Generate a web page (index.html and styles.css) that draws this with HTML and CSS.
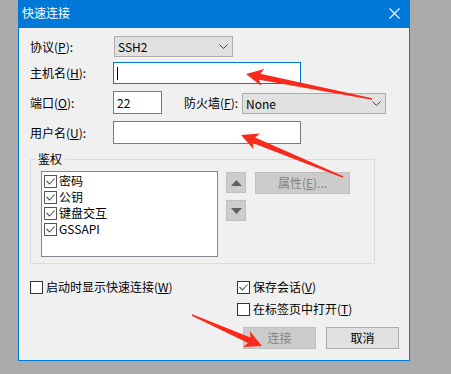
FILE: index.html
```html
<!DOCTYPE html>
<html>
 <head>
  <meta charset="UTF-8">
  <title>快速连接</title>
  <link rel="stylesheet" href="styles.css">
 </head>
 <body>
  <div class="dialog">
   <div class="titlebar">
    <span class="title">快速连接</span>
    <svg class="close" width="11" height="11" viewBox="0 0 11 11"><path d="M0.5 0.5 L10.5 10.5 M10.5 0.5 L0.5 10.5" stroke="#fff" stroke-width="1.1"/></svg>
   </div>

   <div class="content">
    <div class="row row1">
     <span class="lbl">协议(<u>P</u>):</span>
     <div class="combo proto">SSH2<svg class="chev" width="9" height="5" viewBox="0 0 9 5"><polyline points="0.5,0.5 4.5,4.5 8.5,0.5" fill="none" stroke="#444"/></svg></div>
    </div>
    <div class="row row2">
     <span class="lbl">主机名(<u>H</u>):</span>
     <div class="edit wide focus"><span class="caret"></span></div>
    </div>
    <div class="row row3">
     <span class="lbl">端口(<u>O</u>):</span>
     <div class="edit port">22</div>
     <span class="lbl2">防火墙(<u>F</u>):</span>
     <div class="combo fw">None<svg class="chev" width="9" height="5" viewBox="0 0 9 5"><polyline points="0.5,0.5 4.5,4.5 8.5,0.5" fill="none" stroke="#444"/></svg></div>
    </div>
    <div class="row row4">
     <span class="lbl">用户名(<u>U</u>):</span>
     <div class="edit wide user"></div>
    </div>

    <fieldset class="group">
     <legend>鉴权</legend>
     <div class="auth">
      <div class="list">
       <div class="item"><span class="cb"><svg width="11" height="11" viewBox="0 0 11 11"><polyline points="1.5,5 4.5,8 9.5,2.5" fill="none" stroke="#555" stroke-width="1.1"/></svg></span>密码</div>
       <div class="item"><span class="cb"><svg width="11" height="11" viewBox="0 0 11 11"><polyline points="1.5,5 4.5,8 9.5,2.5" fill="none" stroke="#555" stroke-width="1.1"/></svg></span>公钥</div>
       <div class="item"><span class="cb"><svg width="11" height="11" viewBox="0 0 11 11"><polyline points="1.5,5 4.5,8 9.5,2.5" fill="none" stroke="#555" stroke-width="1.1"/></svg></span>键盘交互</div>
       <div class="item"><span class="cb"><svg width="11" height="11" viewBox="0 0 11 11"><polyline points="1.5,5 4.5,8 9.5,2.5" fill="none" stroke="#555" stroke-width="1.1"/></svg></span>GSSAPI</div>
      </div>
      <div class="movers">
       <div class="mover"><svg width="11" height="6" viewBox="0 0 11 6"><polygon points="5.5,0 11,6 0,6" fill="#606060"/></svg></div>
       <div class="mover"><svg width="11" height="6" viewBox="0 0 11 6"><polygon points="0,0 11,0 5.5,6" fill="#606060"/></svg></div>
      </div>
      <div class="btn off prop">属性(<u>E</u>)...</div>
     </div>
    </fieldset>

    <div class="opts">
     <div class="opts-left">
      <div class="check"><span class="cb dark"></span>启动时显示快速连接(<u>W</u>)</div>
     </div>
     <div class="opts-right">
      <div class="check"><span class="cb dark"><svg width="11" height="11" viewBox="0 0 11 11"><polyline points="1.5,5 4.5,8 9.5,2.5" fill="none" stroke="#555" stroke-width="1.1"/></svg></span>保存会话(<u>V</u>)</div>
      <div class="check"><span class="cb dark"></span>在标签页中打开(<u>T</u>)</div>
     </div>
    </div>

    <div class="buttons">
     <div class="btn off">连接</div>
     <div class="btn">取消</div>
    </div>
   </div>
  </div>

  <!-- red annotation arrows drawn over the dialog -->
  <svg class="marks" width="451" height="374" viewBox="0 0 451 374">
   <polygon fill="#f92a1c" points="246,74 264.3,69 260.3,73.8 372.2,98.2 371.8,99.8 259.1,79.7 261,85.7"/>
   <polygon fill="#f92a1c" points="241,135 260,133.6 255.1,137.6 343.3,176.3 342.7,177.7 252.8,143.1 253.5,149.3"/>
   <polygon fill="#f92a1c" points="262,346 249.9,331.3 250.4,337.6 192.3,314.3 191.7,315.7 248,343.1 243,346.9"/>
  </svg>
 </body>
</html>
```

FILE: styles.css
```css
BODY    { margin: 0; background-color: #ABABAB; position: relative;
          font: 12px/16px "Noto Sans CJK SC", sans-serif; color: #000; }
U       { text-underline-offset: 1px; }

.dialog   { margin-left: 18px; width: 392px; box-sizing: border-box;
            border: 1px solid #0078D7; border-top: 0; background-color: #F0F0F0; }
.titlebar { height: 28px; background-color: #0078D7; color: #FFF;
            display: flex; align-items: center; padding: 0 9px 2px 3px; box-sizing: border-box; }
.close    { margin-left: auto; }

.content  { padding: 8px 0 11px 11px; }

.row      { display: flex; align-items: center; }
.row1     { margin-bottom: 5px; }
.row2     { margin-bottom: 7px; }
.row3     { margin-bottom: 7px; }
.row4     { margin-bottom: 7px; }
.lbl      { width: 83px; }
.lbl2     { width: 58px; margin-left: 22px; }

/* combo boxes and edit fields */
.combo    { height: 21px; box-sizing: border-box; border: 1px solid #ADADAD; background-color: #E1E1E1;
            display: flex; align-items: center; padding: 0 4px 0 3px; }
.chev     { margin-left: auto; }
.proto    { width: 119px; margin-left: 1px; }
.fw       { width: 144px; align-self: flex-end; }

.edit     { height: 22px; box-sizing: border-box; border: 1px solid #7A7A7A; background-color: #FFF;
            display: flex; align-items: center; padding-left: 3px; }
.wide     { width: 188px; }
.focus    { border-color: #0078D7; }
.port     { width: 49px; height: 23px; }
.user     { height: 23px; }
.caret    { width: 1px; height: 13px; background-color: #000; }

/* authentication group */
.group    { margin: 0; width: 345px; box-sizing: border-box; border: 1px solid #DCDCDC;
            padding: 4px 0 6px 4px; }
.group LEGEND { padding: 0 3px; }
.auth     { display: flex; align-items: flex-start; margin-left: 6px; }
.list     { width: 177px; height: 86px; box-sizing: border-box; border: 1px solid #828790;
            background-color: #FFF; padding-top: 1px; }
.item     { height: 16px; display: flex; align-items: center; }
.item .cb { margin: 0 2px 0 2px; }

.cb       { width: 13px; height: 13px; box-sizing: border-box; border: 1px solid #555;
            background-color: #FFF; display: inline-flex; align-items: center; justify-content: center; }
.cb.dark  { border-color: #333; margin-right: 3px; }

.movers   { display: flex; flex-direction: column; gap: 7px; margin: 1px 0 0 8px; }
.mover    { width: 20px; height: 21px; box-sizing: border-box; border: 1px solid #BFBFBF;
            background-color: #CCC; display: flex; align-items: center; justify-content: center; }

.btn      { width: 73px; height: 22px; box-sizing: border-box; border: 1px solid #ADADAD;
            background-color: #E1E1E1; display: flex; align-items: center; justify-content: center; }
.btn.off  { border-color: #BFBFBF; background-color: #CCC; color: #838383; }
.prop     { width: 95px; margin: 1px 0 0 9px; }

/* options and dialog buttons */
.opts       { display: flex; margin-top: 15px; }
.opts-left  { width: 207px; }
.opts-right { display: flex; flex-direction: column; gap: 6px; }
.check      { height: 16px; display: flex; align-items: center; }

.buttons  { display: flex; justify-content: flex-end; gap: 10px; margin-top: 10px; padding-right: 10px; }

.marks    { position: absolute; left: 0; top: 0; pointer-events: none; }
```
